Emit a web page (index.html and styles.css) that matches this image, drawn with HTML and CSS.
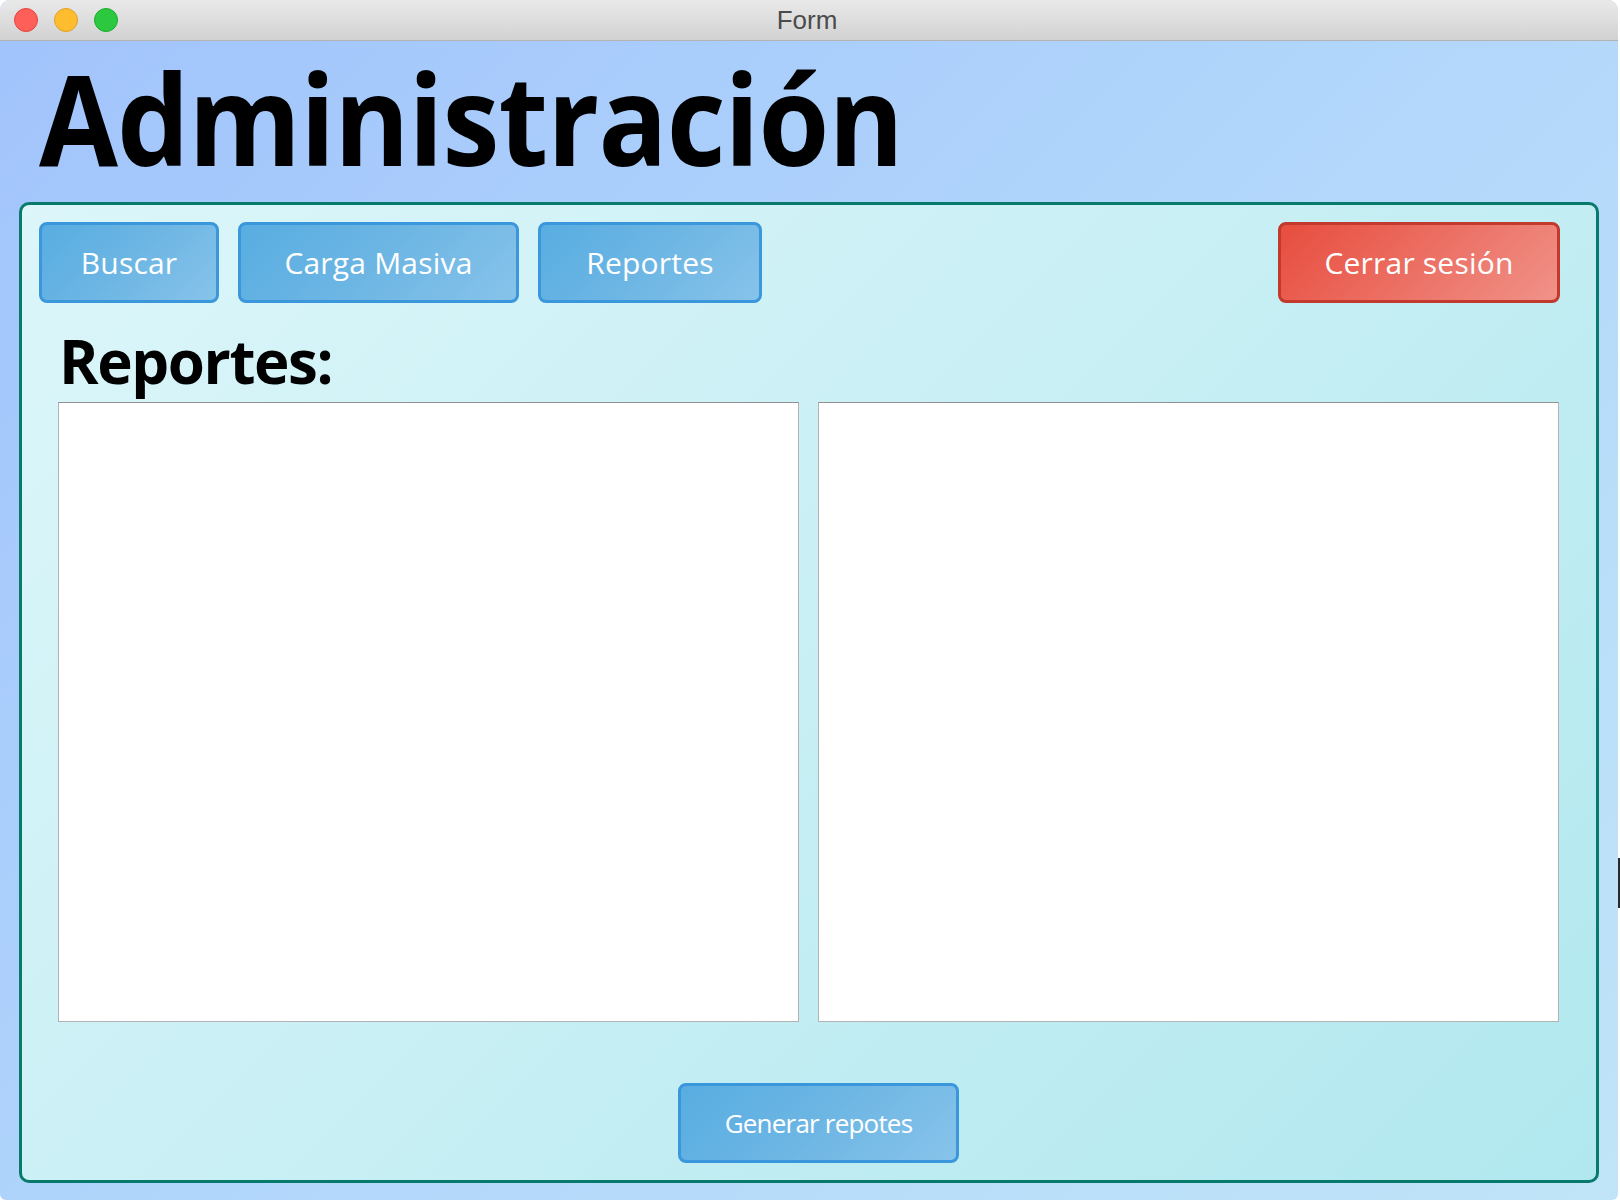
FILE: index.html
```html
<!DOCTYPE html>
<html lang="es">
<head>
<meta charset="utf-8">
<title>Form</title>
<link rel="stylesheet" href="styles.css">
</head>
<body>
<div class="window">
  <div class="titlebar">
    <div class="lights">
      <span class="light light-red"></span>
      <span class="light light-yellow"></span>
      <span class="light light-green"></span>
    </div>
    <div class="window-title">Form</div>
    <div></div>
  </div>
  <div class="content">
    <h1 class="page-title"><span class="page-title-text">Administración</span></h1>
    <div class="panel">
      <div class="toolbar">
        <button class="btn btn-search">Buscar</button>
        <button class="btn btn-upload">Carga Masiva</button>
        <button class="btn btn-reports">Reportes</button>
        <button class="btn btn-danger btn-logout">Cerrar sesión</button>
      </div>
      <div class="reports">
        <h2 class="reports-title">Reportes:</h2>
        <div class="report-boxes">
          <div class="report-box"></div>
          <div class="report-box"></div>
        </div>
      </div>
      <div class="actions">
        <button class="btn btn-small btn-generate">Generar repotes</button>
      </div>
    </div>
  </div>
</div>
<div class="edge-mark"></div>
</body>
</html>
```

FILE: styles.css
```css
html, body {
  margin: 0;
  padding: 0;
}

body {
  width: 1620px;
  height: 1200px;
  overflow: hidden;
  position: relative;
  background: #ffffff;
  font-family: "Open Sans", "Noto Sans", sans-serif;
}

.window {
  width: 1618px;
  height: 1200px;
  display: flex;
  flex-direction: column;
  border-radius: 10px 10px 6px 6px;
  overflow: hidden;
  background: linear-gradient(135deg, #a1c3fc 0%, #b1d6fb 50%, #c0e5f8 100%);
}

.titlebar {
  height: 40px;
  flex: none;
  display: grid;
  grid-template-columns: 1fr auto 1fr;
  align-items: center;
  background: linear-gradient(#e9e9e9, #d2d2d2);
  border-bottom: 1px solid #b3b3b3;
}

.lights {
  display: flex;
  gap: 16px;
  padding-left: 14px;
}

.light {
  width: 22px;
  height: 22px;
  border-radius: 50%;
  border: 1px solid transparent;
}

.light-red {
  background: #fe5f58;
  border-color: #e2453f;
}

.light-yellow {
  background: #febc2f;
  border-color: #dfa024;
}

.light-green {
  background: #2bc840;
  border-color: #1dab2c;
}

.window-title {
  font-family: "Liberation Sans", Arial, sans-serif;
  font-size: 26px;
  color: #4b4b4b;
  line-height: 40px;
  margin-left: -4px;
}

.content {
  flex: 1;
  display: flex;
  flex-direction: column;
  padding: 0 19px 17px 19px;
  min-height: 0;
}

.page-title {
  margin: 0;
  padding-left: 20px;
  height: 161px;
  line-height: 153px;
  font-family: "Open Sans", "Noto Sans", sans-serif;
  font-weight: 700;
  font-size: 125px;
  color: #000;
  white-space: nowrap;
}

.page-title-text {
  display: inline-block;
  transform: scaleX(0.916);
  transform-origin: left center;
  letter-spacing: -1px;
}

.panel {
  flex: 1;
  display: flex;
  flex-direction: column;
  border: 3px solid #087a6b;
  border-radius: 10px;
  background: linear-gradient(135deg, #dcf6fa 0%, #c7eff4 50%, #b1e8ef 100%);
  min-height: 0;
}

.toolbar {
  display: flex;
  gap: 19px;
  padding: 17px 36px 0 17px;
}

.btn {
  height: 81px;
  box-sizing: border-box;
  border: 3px solid #3b97dc;
  border-radius: 8px;
  background: linear-gradient(135deg, #58ade1 0%, #6db6e4 50%, #87c3ea 100%);
  color: #ffffff;
  font-family: "Open Sans", "Noto Sans", sans-serif;
  font-size: 30px;
  letter-spacing: 0.2px;
  padding: 0;
  cursor: pointer;
}

.btn-search { width: 180px; }
.btn-upload { width: 281px; }
.btn-reports { width: 224px; }

.btn-logout {
  width: 282px;
  margin-left: auto;
}

.btn-danger {
  border-color: #c2392d;
  background: linear-gradient(135deg, #e74d3e 0%, #ec6f63 50%, #f09289 100%);
}

.reports {
  flex: 1;
  display: flex;
  flex-direction: column;
  padding: 29px 37px 0 36px;
  min-height: 0;
}

.reports-title {
  margin: 0 0 11px 1px;
  font-family: "Open Sans", "Noto Sans", sans-serif;
  font-weight: 700;
  font-size: 60px;
  line-height: 59px;
  letter-spacing: -1.4px;
  color: #000;
}

.report-boxes {
  flex: 1;
  display: flex;
  gap: 19px;
}

.report-box {
  flex: 1;
  background: #ffffff;
  border: 1px solid #b3b3b3;
  border-top-color: #929292;
}

.actions {
  display: flex;
  justify-content: center;
  padding: 61px 0 17px 19px;
}

.btn-small {
  width: 281px;
  height: 80px;
  font-size: 26px;
  letter-spacing: -0.8px;
}

.edge-mark {
  position: absolute;
  right: 0;
  top: 858px;
  width: 2px;
  height: 50px;
  background: #2a2a2a;
}
```
